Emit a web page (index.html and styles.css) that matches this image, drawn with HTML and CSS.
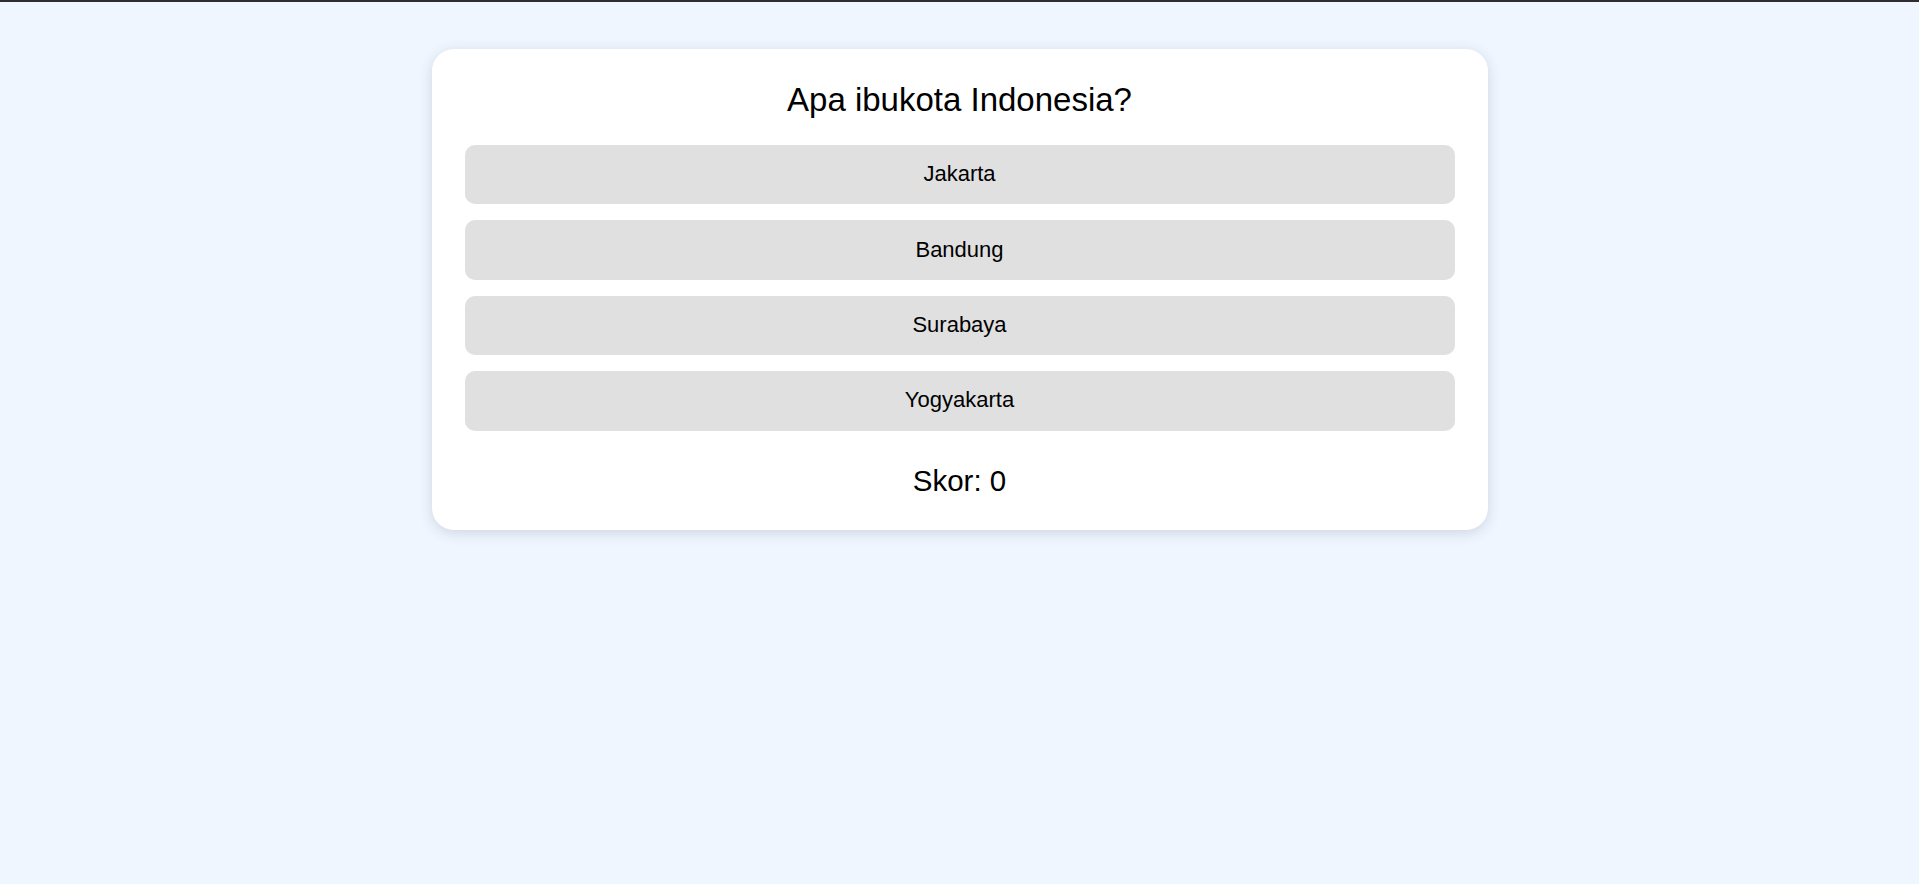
FILE: index.html
```html
<!DOCTYPE html>
<html lang="id">
<head>
<meta charset="utf-8">
<title>Kuis</title>
<link rel="stylesheet" href="styles.css">
</head>
<body>
<main class="page">
  <section class="quiz-card">
    <h2 class="question">Apa ibukota Indonesia?</h2>
    <div class="options">
      <button class="option">Jakarta</button>
      <button class="option">Bandung</button>
      <button class="option">Surabaya</button>
      <button class="option">Yogyakarta</button>
    </div>
    <p class="score">Skor: 0</p>
  </section>
</main>
</body>
</html>
```
FILE: styles.css
```css
html, body {
  margin: 0;
  padding: 0;
}
body {
  background: #eff6ff;
  border-top: 2px solid #2e2e30;
  font-family: "Liberation Sans", Arial, sans-serif;
  color: #000;
  min-height: 882px;
}
.page {
  padding-top: 47px;
  display: flex;
  justify-content: center;
}
.quiz-card {
  width: 1056px;
  box-sizing: border-box;
  background: #fff;
  border-radius: 22px;
  box-shadow: 0 3px 14px rgba(30, 50, 90, 0.16);
  padding: 32px 33px 31.6px;
  display: flex;
  flex-direction: column;
}
.question {
  margin: 0 0 26px;
  font-size: 33px;
  font-weight: normal;
  text-align: center;
  line-height: normal;
}
.options {
  display: flex;
  flex-direction: column;
  gap: 16px;
}
.option {
  height: 59.4px;
  border: none;
  border-radius: 10px;
  background: #e0e0e0;
  font-family: "Liberation Sans", Arial, sans-serif;
  font-size: 22px;
  color: #000;
  padding: 0 0 1px;
}
.score {
  margin: 33.6px 0 0;
  font-size: 29.5px;
  text-align: center;
  line-height: normal;
}
```
